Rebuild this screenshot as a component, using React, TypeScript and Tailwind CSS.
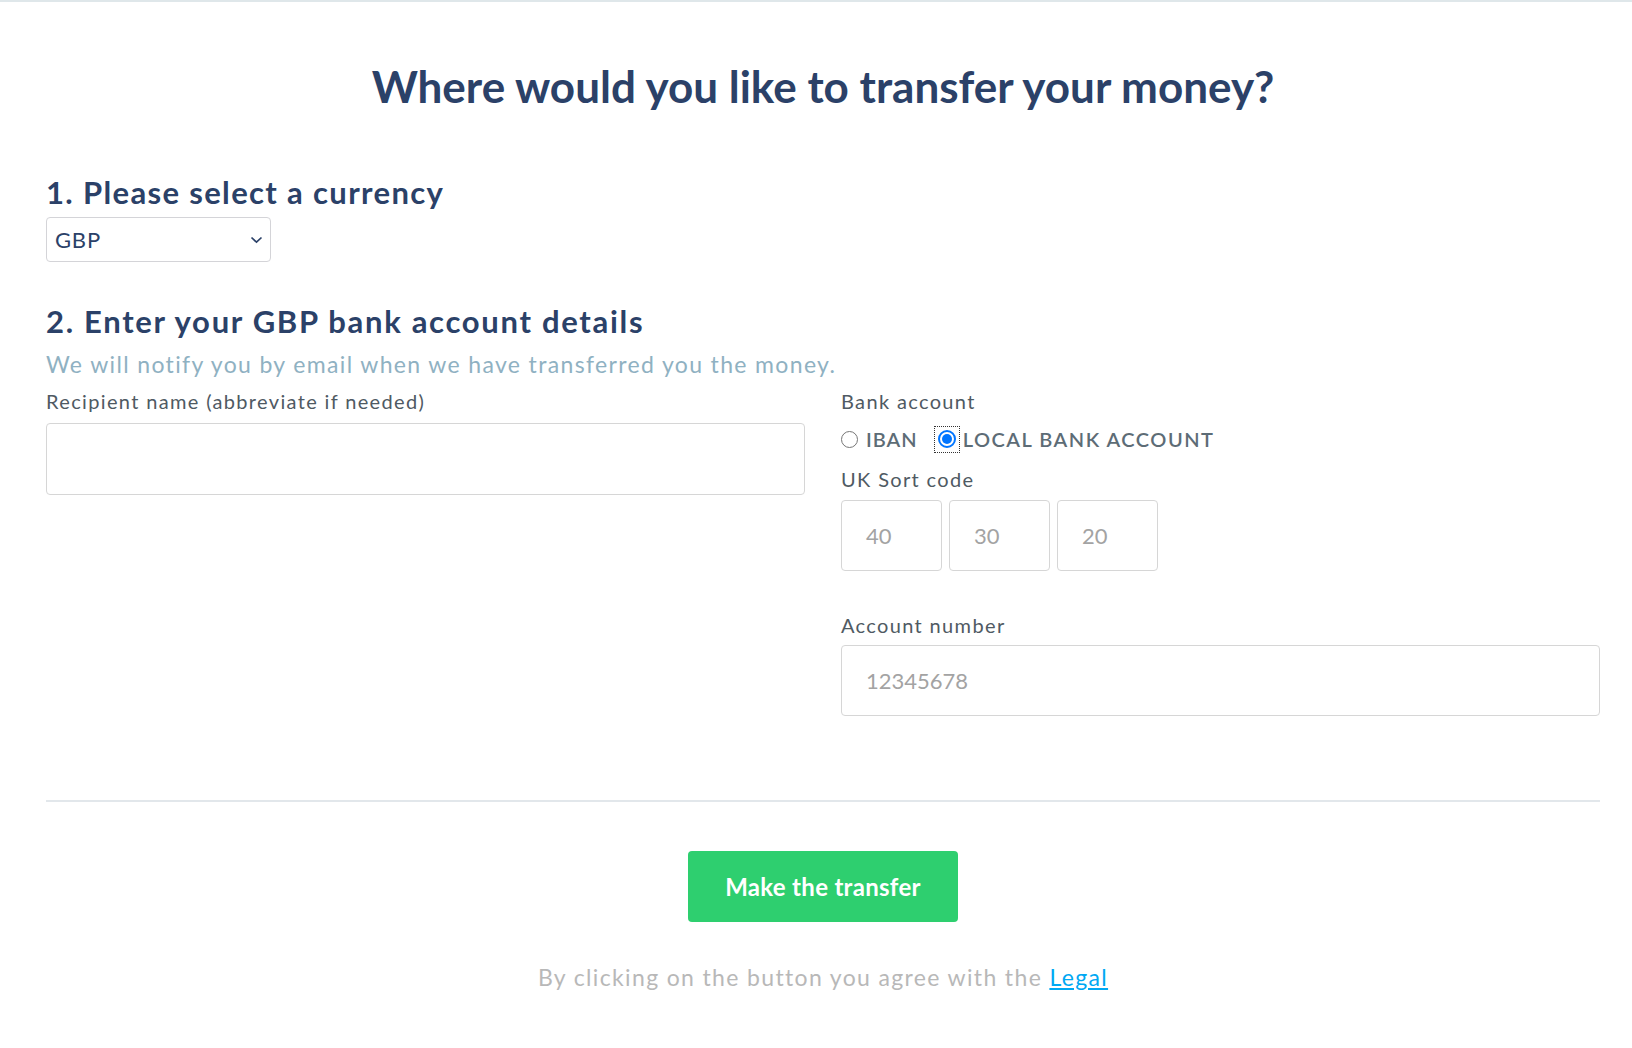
import React from "react";

export default function App() {
  const font = { fontFamily: "Lato, 'Noto Sans', sans-serif" };
  return (
    <div className="min-h-[1048px] w-full bg-white border-t-2 border-[#dfe7ea]" style={font}>
      <div className="pl-[46px] pr-[32px]">
        <h1 className="pt-[56px] text-center text-[44px] leading-[56px] font-bold text-[#2b4168]">
          Where would you like to transfer your money?
        </h1>

        <h2 className="mt-[60px] text-[31px] leading-[36px] font-bold tracking-[1.35px] text-[#2b4168]">
          1. Please select a currency
        </h2>
        <div className="mt-[7px] relative w-[225px] h-[45px] rounded-[4px] border border-[#d4d4d8] flex items-center pl-[8px]">
          <span className="text-[22px] tracking-[0.8px] text-[#2b4168]">GBP</span>
          <svg className="absolute right-[7px] top-[18px]" width="13" height="8" viewBox="0 0 13 8">
            <path d="M1.5 1.5 L6.5 6.2 L11.5 1.5" fill="none" stroke="#2b4168" strokeWidth="1.7" />
          </svg>
        </div>

        <h2 className="mt-[41px] text-[31px] leading-[36px] font-bold tracking-[1.7px] text-[#2b4168]">
          2. Enter your GBP bank account details
        </h2>
        <p className="mt-[10px] text-[23px] leading-[30px] tracking-[1.35px] text-[#8fb1c2]">
          We will notify you by email when we have transferred you the money.
        </p>

        <div className="mt-[9px] grid grid-cols-2 gap-[36px]">
          <div>
            <div className="text-[20px] leading-[26px] tracking-[1.35px] text-[#4f5a63]">Recipient name (abbreviate if needed)</div>
            <div className="mt-[9px] h-[72px] rounded-[4px] border border-[#d6d6d6]" />
          </div>
          <div>
            <div className="text-[20px] leading-[26px] tracking-[1.35px] text-[#4f5a63]">Bank account</div>
            <div className="mt-[11px] flex items-center h-[28px]">
              <span className="w-[17px] h-[17px] rounded-full border border-[#767676] bg-white" />
              <span className="ml-[8px] text-[20px] font-semibold tracking-[1px] text-[#5d6c76]">IBAN</span>
              <span className="ml-[16px] w-[26px] h-[27px] border border-dotted border-[#333] flex items-center justify-center">
                <span className="w-[18px] h-[18px] rounded-full border-2 border-[#0075ff] flex items-center justify-center">
                  <span className="w-[10px] h-[10px] rounded-full bg-[#0075ff]" />
                </span>
              </span>
              <span className="ml-[3px] text-[20px] font-semibold tracking-[1.5px] text-[#5d6c76]">LOCAL BANK ACCOUNT</span>
            </div>
            <div className="mt-[13px] text-[20px] leading-[26px] tracking-[1.35px] text-[#4f5a63]">UK Sort code</div>
            <div className="mt-[8px] flex gap-[7px]">
              {["40", "30", "20"].map((v) => (
                <div key={v} className="w-[101px] h-[71px] rounded-[4px] border border-[#d6d6d6] flex items-center pl-[24px] text-[22px] text-[#a3a3a3]">
                  {v}
                </div>
              ))}
            </div>
            <div className="mt-[41px] text-[20px] leading-[26px] tracking-[1.35px] text-[#4f5a63]">Account number</div>
            <div className="mt-[7px] h-[71px] rounded-[4px] border border-[#d6d6d6] flex items-center pl-[24px] text-[22px] text-[#a3a3a3]">
              12345678
            </div>
          </div>
        </div>

        <div className="mt-[84px] h-[2px] bg-[#e2e7eb]" />

        <div className="mt-[49px] flex justify-center">
          <button className="w-[270px] h-[71px] rounded-[4px] bg-[#2ecf6f] text-white text-[24px] tracking-[0.3px] font-bold">
            Make the transfer
          </button>
        </div>

        <p className="mt-[39px] text-center text-[23px] leading-[32px] tracking-[1.35px] text-[#b8b8b8]">
          By clicking on the button you agree with the{" "}
          <a href="#" className="text-[#00a8f3] underline">Legal</a>
        </p>
      </div>
    </div>
  );
}
